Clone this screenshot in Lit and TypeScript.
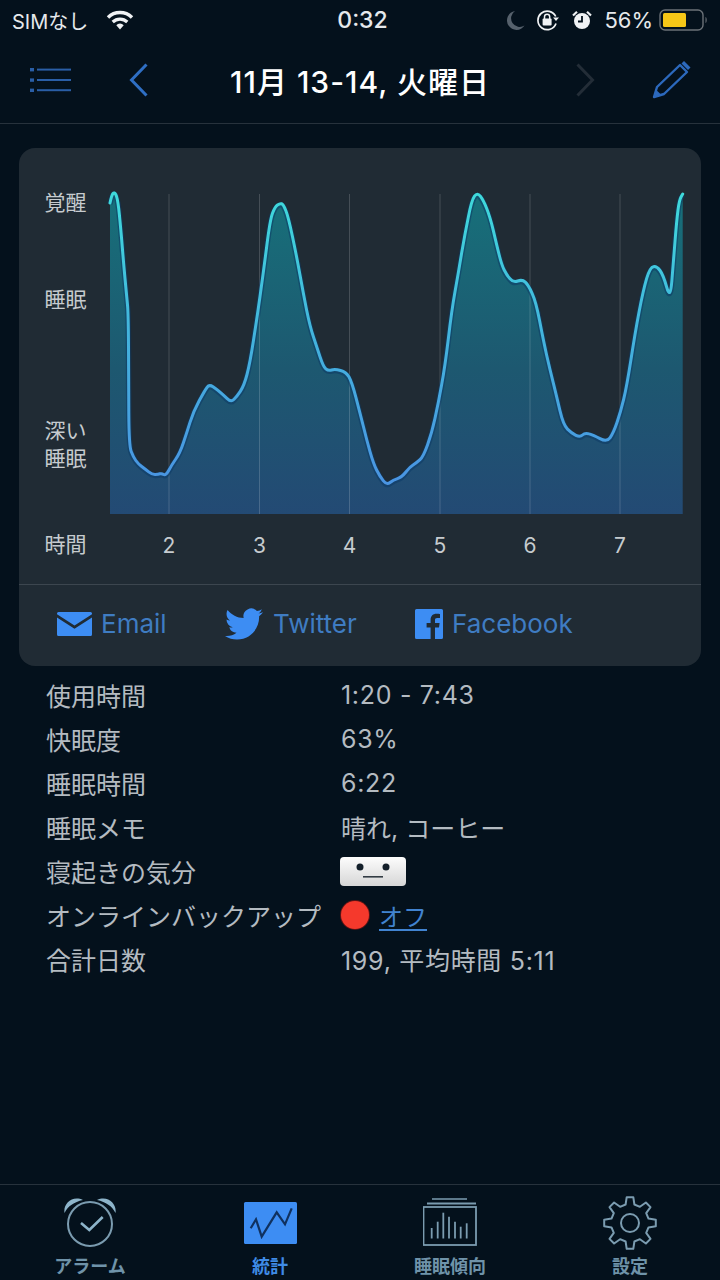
import { LitElement, html, css, svg } from "lit";
import { customElement } from "lit/decorators.js";

// sleep curve, read off the screenshot in page px, shifted to card space in smoothPath
const CURVE: number[][] = [
  [110, 203], [111.7, 195], [114.3, 192], [117.3, 197], [120, 220], [123.3, 260], [126.7, 297], [128.3, 313], [128.6, 380], [129, 446],
  [133.3, 457], [138.3, 464], [145, 469], [152.3, 474.7], [158.3, 474.3], [161.7, 473.3], [165.7, 475.7],
  [171.7, 465], [180, 453], [186.7, 433], [193.3, 411.7], [205, 390], [209.3, 384.3], [216.7, 389.3], [223.3, 395],
  [231, 402.3], [236.7, 396.7], [244, 386], [250, 363], [256.7, 320], [263.3, 273], [270, 220], [275, 206.7],
  [280, 203.3], [283.3, 204.3], [288.3, 216.7], [296.7, 256.7], [303.3, 293.3], [310, 326.7], [316.7, 346.7],
  [323.3, 366.7], [328.3, 371], [335, 369], [346, 372], [351.7, 381.7], [360, 413], [366.7, 440], [373.3, 463.3],
  [380, 476.7], [386.7, 485], [393.3, 480], [401.7, 477.3], [410, 466.7], [416.7, 462.7], [423.3, 456.7],
  [431.7, 433.3], [438.3, 403.3], [445, 366.7], [451.7, 310], [458.3, 273.3], [465, 233.3], [471.7, 200],
  [477.3, 192.3], [483.3, 200], [490, 216.7], [496.7, 245], [501.7, 265], [506.7, 275], [513.3, 282.7],
  [522.3, 279.3], [528.3, 285], [536, 301.7], [543.3, 340], [550, 370], [556.7, 396.7], [563.3, 425],
  [571.7, 433.3], [580, 437.3], [585, 432.7], [593.3, 435], [606.7, 442.3], [613.3, 433.3], [620.7, 411.7],
  [626.7, 386.7], [635, 333.3], [643.3, 290], [650, 267.3], [656.7, 266], [663.3, 275], [670.3, 300],
  [673.3, 263], [676.7, 220], [679.3, 200], [682.7, 194],
];

const CARD_X = 19;
const CARD_Y = 148;
const BASE_Y = 514;

function smoothPath(pts: number[][]) {
  const p = pts.map(([x, y]) => [x - CARD_X, y - CARD_Y]);
  let d = `M${p[0][0]} ${p[0][1]}`;
  for (let i = 1; i < p.length - 1; i++) {
    const mx = (p[i][0] + p[i + 1][0]) / 2;
    const my = (p[i][1] + p[i + 1][1]) / 2;
    d += `Q${p[i][0]} ${p[i][1]} ${mx.toFixed(1)} ${my.toFixed(1)}`;
  }
  const last = p[p.length - 1];
  return d + `L${last[0]} ${last[1]}`;
}

function gearPath(cx: number, cy: number, teeth: number, rOut: number, rIn: number) {
  let d = "";
  const step = (Math.PI * 2) / teeth;
  for (let i = 0; i < teeth; i++) {
    const a = i * step - Math.PI / 2;
    const pts: [number, number][] = [
      [rIn, a - step * 0.3],
      [rOut, a - step * 0.16],
      [rOut, a + step * 0.16],
      [rIn, a + step * 0.3],
    ];
    for (const [r, t] of pts) {
      const x = (cx + r * Math.cos(t)).toFixed(1);
      const y = (cy + r * Math.sin(t)).toFixed(1);
      d += `${d ? "L" : "M"}${x} ${y}`;
    }
  }
  return d + "Z";
}

const ROWS: [string, string][] = [
  ["使用時間", "1:20 - 7:43"],
  ["快眠度", "63%"],
  ["睡眠時間", "6:22"],
];

@customElement("app-root")
export class AppRoot extends LitElement {
  static styles = css`
    :host {
      display: flex;
      flex-direction: column;
      width: 720px;
      height: 1280px;
      overflow: hidden;
      background: #04111c;
      color: #b4bbc1;
      font-family: Inter, "Noto Sans CJK JP", sans-serif;
    }
    svg { display: block; flex: none; }

    .status {
      display: grid;
      grid-template-columns: 1fr auto 1fr;
      align-items: center;
      height: 40px;
      padding: 0 11px 0 12px;
      color: #e6e9ec;
      font-size: 20px;
    }
    .status-left { display: flex; align-items: center; gap: 18px; }
    .status-time { font-size: 23px; font-weight: 500; padding-left: 4px; }
    .status-right { display: flex; align-items: center; justify-content: flex-end; }
    .moon { margin-right: 11px; }
    .lock { margin-right: 12px; }
    .pct { font-size: 22px; margin: 0 6px 0 12px; }

    .nav {
      display: grid;
      grid-template-columns: 30px 41px 58px 19px 1fr 19px 57px 40px;
      align-items: center;
      height: 84px;
      padding-right: 28px;
      border-bottom: 1px solid #27323c;
      box-sizing: border-box;
      padding-bottom: 4px;
    }
    .nav-list { grid-column: 2; }
    .nav-back { grid-column: 4; }
    .nav-title {
      grid-column: 5;
      text-align: center;
      color: #fff;
      font-size: 30px;
      font-weight: 500;
      letter-spacing: 1px;
      white-space: nowrap;
      padding-right: 4px;
    }
    .nav-next { grid-column: 6; }
    .nav-edit { grid-column: 8; }

    main { flex: 1; padding: 24px 19px 0; }
    .card {
      background: #202b34;
      border-radius: 16px;
      overflow: hidden;
    }
    .chart-text { fill: #c6cbcf; font-size: 21px; }
    .share {
      display: flex;
      align-items: center;
      height: 82px;
      box-sizing: border-box;
      border-top: 1px solid #3c464f;
      padding: 0 0 4px 38px;
    }
    .share-item {
      display: flex;
      align-items: center;
      color: #3f7cc2;
      font-size: 26px;
    }
    .share-email { width: 168px; gap: 9px; }
    .share-twitter { width: 190px; gap: 10px; }
    .share-facebook { gap: 9px; }

    .info {
      display: grid;
      grid-template-columns: 295px 1fr;
      grid-auto-rows: 44px;
      align-items: center;
      padding: 7px 0 0 27px;
      font-size: 25px;
    }
    .info-value { display: flex; align-items: center; letter-spacing: .7px; }
    .info-memo { letter-spacing: 0; }
    .face {
      width: 66px;
      height: 29px;
      margin-left: -1px;
      border-radius: 4px;
      background: linear-gradient(#fdfdfd, #d6d6d6);
    }
    .dot {
      width: 28px;
      height: 28px;
      border-radius: 50%;
      background: #f5392c;
      box-shadow: 0 0 0 1px #5e1414;
      margin-right: 10px;
    }
    .link { color: #4183d0; font-size: 24px; letter-spacing: 0; text-decoration: underline; text-underline-offset: 3px; }

    .tabs {
      display: grid;
      grid-template-columns: repeat(4, 180px);
      height: 96px;
      border-top: 1px solid #27323c;
      box-sizing: border-box;
    }
    .tab {
      display: flex;
      flex-direction: column;
      align-items: center;
      padding-top: 11px;
      color: #6f93a9;
      font-size: 18px;
      font-weight: 700;
    }
    .tab span { margin-top: 4px; line-height: 26px; }
    .tab.active { color: #3f8be6; }
  `;

  private chart() {
    const line = smoothPath(CURVE);
    const first = CURVE[0][0] - CARD_X;
    const last = CURVE[CURVE.length - 1][0] - CARD_X;
    const base = BASE_Y - CARD_Y;
    const grid = [169, 259.5, 349.5, 440, 530, 620];
    const hours = ["2", "3", "4", "5", "6", "7"];
    return svg`
      <svg width="682" height="436" viewBox="0 0 682 436">
        <defs>
          <linearGradient id="area" gradientUnits="userSpaceOnUse" x1="0" y1="44" x2="0" y2="${base}">
            <stop offset="0" stop-color="#17707a"></stop>
            <stop offset="0.55" stop-color="#1d5870"></stop>
            <stop offset="1" stop-color="#234a74"></stop>
          </linearGradient>
          <linearGradient id="line" gradientUnits="userSpaceOnUse" x1="0" y1="44" x2="0" y2="${base - 30}">
            <stop offset="0" stop-color="#3fdadb"></stop>
            <stop offset="0.5" stop-color="#43b3dd"></stop>
            <stop offset="1" stop-color="#4a94e2"></stop>
          </linearGradient>
        </defs>
        <path d="${line}L${last} ${base}L${first} ${base}Z" fill="url(#area)"></path>
        ${grid.map((x) => svg`<line x1="${x - CARD_X}" x2="${x - CARD_X}" y1="46" y2="${base}" stroke="#fff" stroke-opacity=".17"></line>`)}
        <path d="${line}" fill="none" stroke="#0d3a66" stroke-opacity=".55" stroke-width="5.500" stroke-linejoin="round" transform="translate(0 1)"></path>
        <path d="${line}" fill="none" stroke="url(#line)" stroke-width="3" stroke-linejoin="round" stroke-linecap="round"></path>
        <text class="chart-text" x="25.500" y="62">覚醒</text>
        <text class="chart-text" x="25.500" y="158.500">睡眠</text>
        <text class="chart-text" x="25.500" y="289.500">深い</text>
        <text class="chart-text" x="25.500" y="317.500">睡眠</text>
        <text class="chart-text" x="25.500" y="404">時間</text>
        ${hours.map((h, i) => svg`<text class="chart-text" x="${grid[i] - CARD_X}" y="405" text-anchor="middle">${h}</text>`)}
      </svg>
    `;
  }

  private statusBar() {
    return html`
      <div class="status">
        <div class="status-left">
          <span>SIMなし</span>
          <svg width="28" height="20" viewBox="0 0 28 20">
            <path d="M2 7.500a17 17 0 0 1 24 0" fill="none" stroke="#f0f2f4" stroke-width="3.400"></path>
            <path d="M6.700 12a10.500 10.500 0 0 1 14.600 0" fill="none" stroke="#f0f2f4" stroke-width="3.200"></path>
            <path d="M10.300 15.200a5 5 0 0 1 7.400 0L14 19.400Z" fill="#f0f2f4"></path>
          </svg>
        </div>
        <div class="status-time">0:32</div>
        <div class="status-right">
          <svg class="moon" width="18" height="20" viewBox="0 0 18 20">
            <path d="M8 1A9.500 9.500 0 1 0 17.500 15.500 8.500 8.500 0 0 1 8 1Z" fill="#56616c"></path>
          </svg>
          <svg class="lock" width="24" height="22" viewBox="0 0 24 22">
            <path d="M20 14.500A9.300 9.300 0 1 1 19.700 7.500" fill="none" stroke="#f0f2f4" stroke-width="1.700"></path>
            <path d="M17 8.500h6l-3 3.600Z" fill="#f0f2f4"></path>
            <rect x="6.600" y="9.600" width="9" height="6.800" rx="1" fill="#f0f2f4"></rect>
            <path d="M8.500 10V7.800a2.600 2.600 0 0 1 5.200 0V10" fill="none" stroke="#f0f2f4" stroke-width="1.500"></path>
          </svg>
          <svg width="20" height="20" viewBox="0 0 20 20">
            <circle cx="10" cy="11" r="8" fill="#f0f2f4"></circle>
            <path d="M10 6v5.500H6" fill="none" stroke="#04111c" stroke-width="1.800"></path>
            <path d="M1 5.500 5 1.800M19 5.500 15 1.800" stroke="#f0f2f4" stroke-width="2.200"></path>
          </svg>
          <span class="pct">56%</span>
          <svg width="50" height="22" viewBox="0 0 50 22">
            <rect x="1" y="1" width="43" height="20" rx="5" fill="none" stroke="#6b7177" stroke-width="1.400"></rect>
            <rect x="4" y="4" width="23" height="14" rx="1.500" fill="#f6c717"></rect>
            <path d="M46.500 8c1.600.4 1.600 5.600 0 6Z" fill="#6b7177"></path>
          </svg>
        </div>
      </div>
    `;
  }

  private navBar() {
    return html`
      <div class="nav">
        <svg class="nav-list" width="41" height="26" viewBox="0 0 41 26">
          <g fill="#2a5ea6">
            <rect x="0" y="1" width="4" height="3.400"></rect>
            <rect x="0" y="11.400" width="4" height="3.400"></rect>
            <rect x="0" y="21.600" width="4" height="3.400"></rect>
            <rect x="7" y="1.600" width="34" height="2"></rect>
            <rect x="7" y="12" width="34" height="2"></rect>
            <rect x="7" y="22.200" width="34" height="2"></rect>
          </g>
        </svg>
        <svg class="nav-back" width="19" height="34" viewBox="0 0 19 34">
          <path d="M17.500 1.500 2.500 17l15 15.500" fill="none" stroke="#2f6fc4" stroke-width="3"></path>
        </svg>
        <div class="nav-title">11月 13-14, 火曜日</div>
        <svg class="nav-next" width="19" height="34" viewBox="0 0 19 34">
          <path d="M1.500 1.500 16.500 17l-15 15.500" fill="none" stroke="#232d37" stroke-width="3"></path>
        </svg>
        <svg class="nav-edit" width="40" height="40" viewBox="0 0 40 40">
          <path d="M2 37 5 27 28 5 35 12 12 34Z" fill="none" stroke="#2c69bd" stroke-width="2.400" stroke-linejoin="round"></path>
          <path d="M2 37 4.300 30 9 34.600Z" fill="#2c69bd"></path>
          <path d="M29.500 3.500 32 1 38.500 7.500 36 10Z" fill="#2c69bd"></path>
        </svg>
      </div>
    `;
  }

  private shareRow() {
    return html`
      <div class="share">
        <div class="share-item share-email">
          <svg width="35" height="24" viewBox="0 0 35 24">
            <path d="M1.500 0h32A1.500 1.500 0 0 1 35 1.500v.8L17.500 13.500 0 2.300v-.8A1.500 1.500 0 0 1 1.500 0Z" fill="#3d8df3"></path>
            <path d="M0 5.600 17.500 16.800 35 5.600V22.500A1.500 1.500 0 0 1 33.500 24h-32A1.500 1.500 0 0 1 0 22.500Z" fill="#3d8df3"></path>
          </svg>
          <span>Email</span>
        </div>
        <div class="share-item share-twitter">
          <svg width="38" height="32" viewBox="0 2 24 20">
            <path fill="#3d8df3" d="M23.953 4.570a10 10 0 01-2.825.775 4.958 4.958 0 002.163-2.723c-.951.555-2.005.959-3.127 1.184a4.920 4.920 0 00-8.384 4.482C7.690 8.095 4.067 6.130 1.640 3.162a4.822 4.822 0 00-.666 2.475c0 1.710.870 3.213 2.188 4.096a4.904 4.904 0 01-2.228-.616v.060a4.923 4.923 0 003.946 4.827 4.996 4.996 0 01-2.212.085 4.936 4.936 0 004.604 3.417 9.867 9.867 0 01-6.102 2.105c-.390 0-.779-.023-1.170-.067a13.995 13.995 0 007.557 2.209c9.053 0 13.998-7.496 13.998-13.985 0-.210 0-.420-.015-.630A9.935 9.935 0 0024 4.590z"></path>
          </svg>
          <span>Twitter</span>
        </div>
        <div class="share-item share-facebook">
          <svg width="28" height="30" viewBox="0 0 28 30">
            <path fill="#3d8df3" d="M1.500 0h25A1.500 1.500 0 0 1 28 1.500v27a1.500 1.500 0 0 1-1.500 1.500H20V18.500h4l.6-4.500H20v-2.800c0-1.300.4-2.200 2.300-2.200H25V5c-.5-.1-1.900-.2-3.500-.2-3.500 0-5.900 2.100-5.900 6V14h-4v4.500h4V30H1.500A1.500 1.500 0 0 1 0 28.500v-27A1.500 1.500 0 0 1 1.500 0Z"></path>
          </svg>
          <span>Facebook</span>
        </div>
      </div>
    `;
  }

  private info() {
    return html`
      <div class="info">
        ${ROWS.map(([k, v]) => html`<div>${k}</div><div class="info-value">${v}</div>`)}
        <div>睡眠メモ</div>
        <div class="info-value info-memo">晴れ, コーヒー</div>
        <div>寝起きの気分</div>
        <div class="info-value">
          <svg class="face" width="66" height="29" viewBox="0 0 66 29">
            <circle cx="20" cy="10" r="3.500" fill="#14202a"></circle>
            <circle cx="46" cy="10" r="3.500" fill="#14202a"></circle>
            <rect x="23" y="19" width="20" height="1.600" fill="#333c44"></rect>
          </svg>
        </div>
        <div>オンラインバックアップ</div>
        <div class="info-value"><div class="dot"></div><span class="link">オフ</span></div>
        <div>合計日数</div>
        <div class="info-value">199, 平均時間 5:11</div>
      </div>
    `;
  }

  private tabBar() {
    const stroke = "#7b9cb0";
    const bars = [
      [8.7, 32], [14.7, 25.7], [20.3, 16.7], [26, 20.7], [32, 25.7], [37.7, 30.7], [43.7, 27.3],
    ];
    return html`
      <div class="tabs">
        <div class="tab">
          <svg width="54" height="54" viewBox="0 0 54 54">
            <circle cx="27" cy="28" r="22" fill="none" stroke="${stroke}" stroke-width="2"></circle>
            <path d="M1.500 17C0 8 9-1 20 4 11 6 5 10 1.500 17ZM52.500 17C54 8 45-1 34 4 43 6 49 10 52.500 17Z" fill="#8db4ca"></path>
            <path d="M18 27 26.300 34 39.700 21" fill="none" stroke="#8db4ca" stroke-width="2.600"></path>
          </svg>
          <span>アラーム</span>
        </div>
        <div class="tab active">
          <svg width="54" height="54" viewBox="0 0 54 54">
            <rect x="1" y="6" width="53" height="42" rx="1.500" fill="#3d8df3"></rect>
            <path d="M7.700 32.300 13 23.300 18.700 40.700 33.700 16.300 42 28.300 48.700 12.300" fill="none" stroke="#10315f" stroke-width="2.200"></path>
          </svg>
          <span>統計</span>
        </div>
        <div class="tab">
          <svg width="54" height="54" viewBox="0 0 54 54">
            <g fill="none" stroke="${stroke}">
              <path d="M9 3h35" stroke-width="1.600"></path>
              <path d="M4 7.500h49" stroke-width="1.800"></path>
              <rect x="0.500" y="11" width="52.500" height="38" stroke-width="1.800"></rect>
              ${bars.map(([x, y]) => svg`<path d="M${x} ${y}V42.500" stroke-width="1.800"></path>`)}
            </g>
          </svg>
          <span>睡眠傾向</span>
        </div>
        <div class="tab">
          <svg width="54" height="54" viewBox="0 0 54 54">
            <path d="${gearPath(27, 27, 8, 26, 19)}" fill="none" stroke="${stroke}" stroke-width="2" stroke-linejoin="round"></path>
            <circle cx="27" cy="27" r="9" fill="none" stroke="${stroke}" stroke-width="2"></circle>
          </svg>
          <span>設定</span>
        </div>
      </div>
    `;
  }

  render() {
    return html`
      ${this.statusBar()}
      ${this.navBar()}
      <main>
        <div class="card">
          ${this.chart()}
          ${this.shareRow()}
        </div>
        ${this.info()}
      </main>
      ${this.tabBar()}
    `;
  }
}
